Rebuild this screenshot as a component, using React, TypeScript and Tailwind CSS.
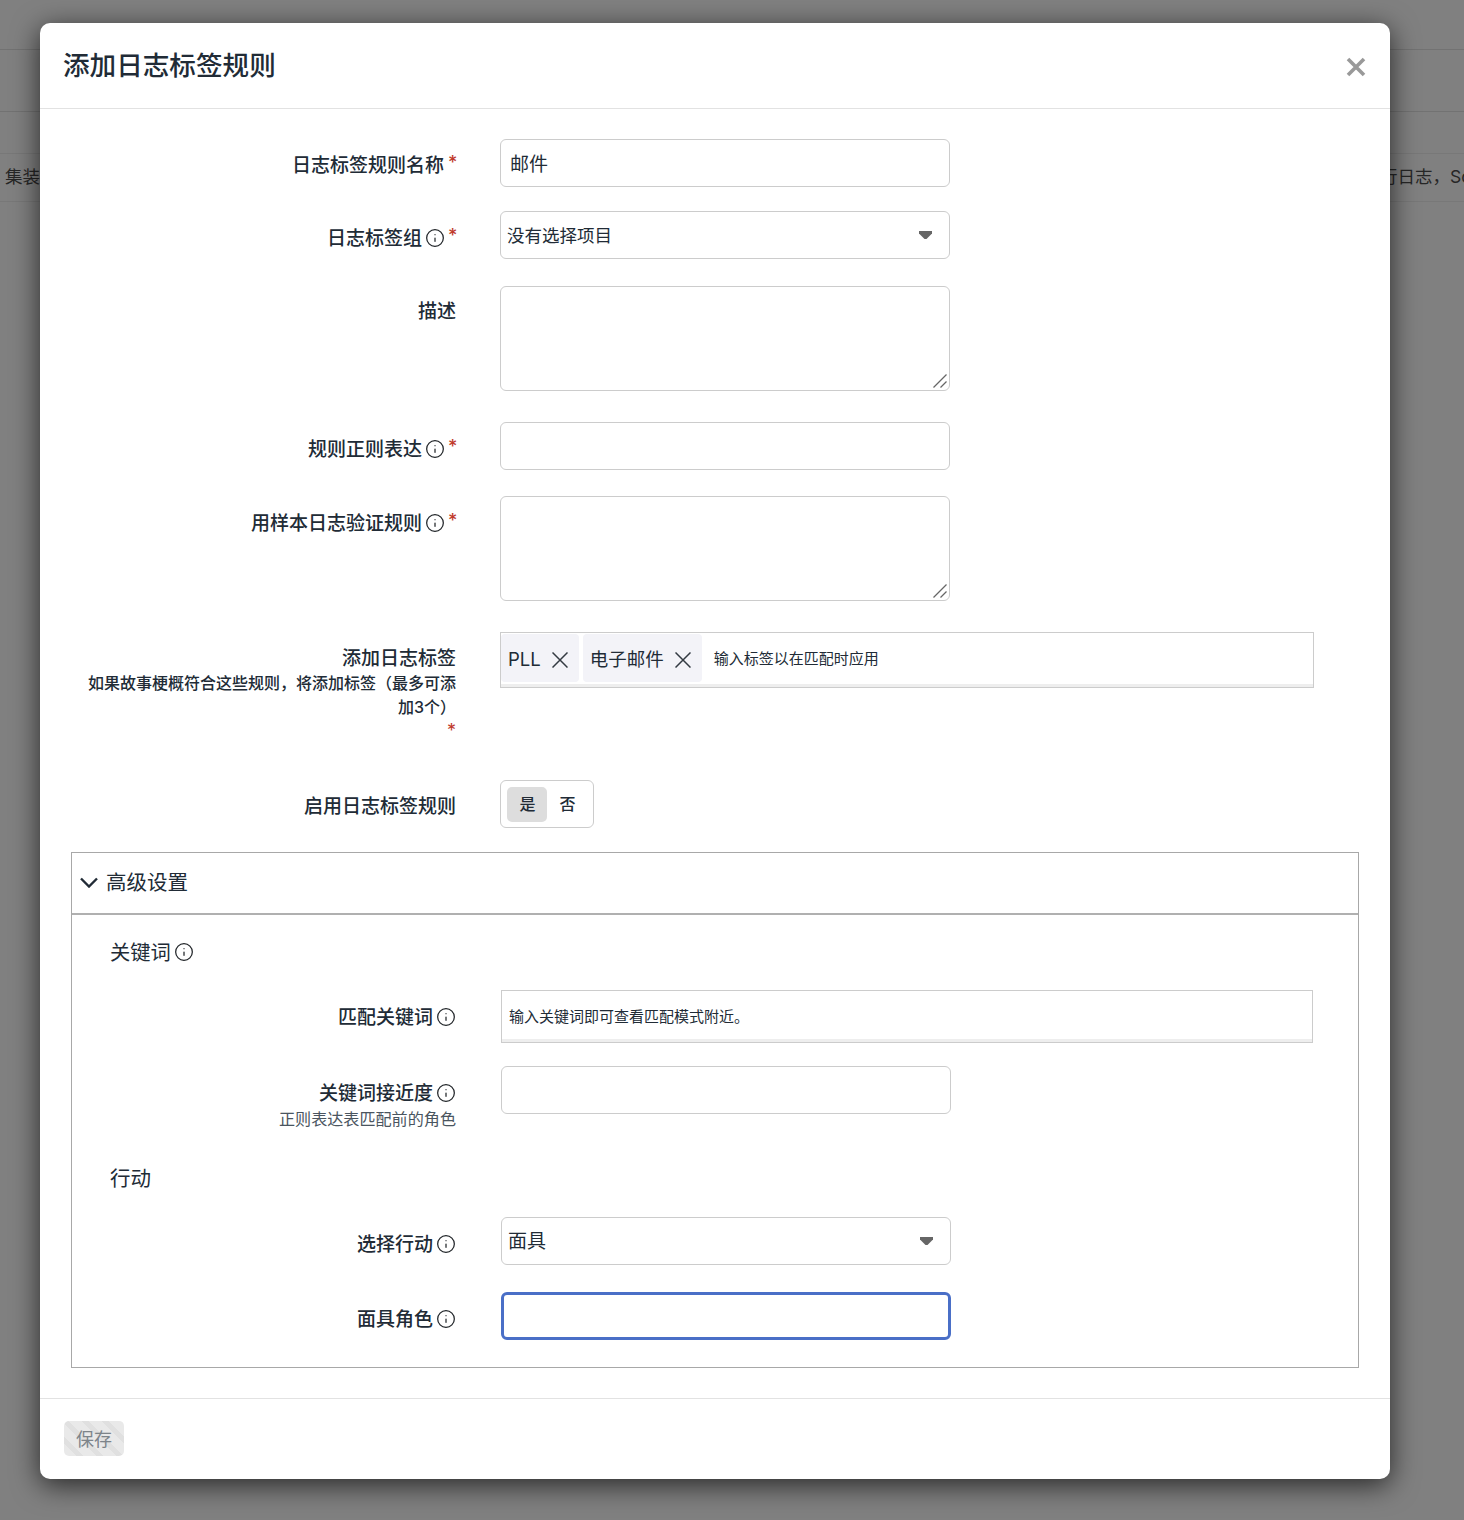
import { Info } from "lucide-react";
import type { ReactNode } from "react";

const inputBox = "h-12 w-[450px] rounded-[6px] border border-[#cccccc] bg-white px-[9px] pb-[2px] text-[19px] text-[#212b36] outline-none";

function Tip() {
  return <Info size={20} strokeWidth={1.5} className="relative -top-[1px] ml-[3px] inline-block shrink-0 text-[#212529]" />;
}

function Star({ after = "ml-[4px]" }: { after?: string }) {
  return <span className={`relative -top-[3px] inline-block w-[8px] text-center text-[18px] leading-none text-[#c0392b] ${after}`}>*</span>;
}

function Label({ children, top = "pt-[15px]", width = "w-[385px]" }: { children: ReactNode; top?: string; width?: string }) {
  return (
    <div className={`shrink-0 pl-[15px] text-right ${width} ${top}`}>
      <div className="flex items-center justify-end text-[19px] leading-6 font-medium text-[#212b36]">{children}</div>
    </div>
  );
}

function Caret() {
  return (
    <svg width="13" height="8" viewBox="0 0 13 8" className="shrink-0">
      <path d="M0 0H13V2.5L7.5 8H5.5L0 2.5Z" fill="#666666" />
    </svg>
  );
}

function Select({ value, size = "text-[17.5px]" }: { value: string; size?: string }) {
  return (
    <div className={`flex h-12 w-[450px] items-center justify-between rounded-[6px] border border-[#cccccc] pr-[17px] pl-[6px] text-[#212b36] ${size}`}>
      <span className="pt-[2px]">{value}</span>
      <Caret />
    </div>
  );
}

function Area() {
  return (
    <div className="relative h-[105px] w-[450px]">
      <textarea className="block h-full w-full resize-none rounded-[6px] border border-[#cccccc] bg-white outline-none" />
      <svg width="16" height="16" viewBox="0 0 16 16" className="pointer-events-none absolute right-[2px] bottom-[2px]">
        <path d="M1.5 14.5L14.5 1.5M8.5 14.5L14.5 8.5" stroke="#666666" strokeWidth="1.3" fill="none" />
      </svg>
    </div>
  );
}

function Tag({ text }: { text: string }) {
  return (
    <div className="mt-[1px] mr-[4px] flex h-[48px] items-center rounded-[4px] bg-[#f3f3f8] pr-[11px] pl-[7px] text-[18.5px] text-[#212b36]">
      <span className="pt-[4px]">{text}</span>
      <svg width="16" height="16" viewBox="0 0 16 16" className="mt-[3px] ml-[11px]">
        <path d="M0.5 0.5L15.5 15.5M15.5 0.5L0.5 15.5" stroke="#333a42" strokeWidth="1.5" fill="none" />
      </svg>
    </div>
  );
}

export default function App() {
  return (
    <div
      className="relative h-[1520px] w-full overflow-hidden bg-[#808080]"
      style={{ fontFamily: 'Inter, "Noto Sans CJK SC", sans-serif' }}
    >
      {/* page behind the dialog */}
      <div className="text-[17.5px] text-[#262626]">
        <div className="h-[50px] border-b border-[#727272]" />
        <div className="h-[62px] border-b border-[#727272]" />
        <div className="h-[42px] border-b border-[#787878]" />
        <div className="flex h-[48px] items-center justify-between border-b border-[#787878] pl-[5px]">
          <span>集装箱</span>
          <span className="w-[84px] overflow-hidden whitespace-nowrap">行日志，Sc</span>
        </div>
      </div>

      {/* dialog */}
      <div className="absolute top-[23px] left-[40px] flex h-[1456px] w-[1350px] flex-col rounded-[10px] bg-white shadow-[0_6px_28px_rgba(0,0,0,0.7)]">
        <div className="flex h-[86px] shrink-0 items-center justify-between border-b border-[#e2e2e2] pr-[24px] pl-[23px]">
          <h1 className="text-[26.6px] font-medium text-[#212b36]">添加日志标签规则</h1>
          <svg width="20" height="20" viewBox="0 0 20 20" className="mt-[3px]">
            <path d="M2 2L18 18M18 2L2 18" stroke="#999999" strokeWidth="3.6" />
          </svg>
        </div>

        <div className="flex-1 px-[31px] pt-[30px]">
          <div className="flex gap-[44px]">
            <Label>
              日志标签规则名称
              <Star />
            </Label>
            <input className={inputBox} defaultValue="邮件" />
          </div>

          <div className="mt-[24px] flex gap-[44px]">
            <Label top="pt-[16px]">
              日志标签组
              <Tip />
              <Star after="ml-[3px]" />
            </Label>
            <Select value="没有选择项目" />
          </div>

          <div className="mt-[27px] flex gap-[44px]">
            <Label top="pt-[14px]">描述</Label>
            <Area />
          </div>

          <div className="mt-[31px] flex gap-[44px]">
            <Label top="pt-[16px]">
              规则正则表达
              <Tip />
              <Star after="ml-[3px]" />
            </Label>
            <input className={inputBox} />
          </div>

          <div className="mt-[26px] flex gap-[44px]">
            <Label top="pt-[16px]">
              用样本日志验证规则
              <Tip />
              <Star after="ml-[3px]" />
            </Label>
            <Area />
          </div>

          <div className="mt-[31px] flex gap-[44px]">
            <div className="w-[385px] shrink-0 pt-[15px] pl-[15px] text-right text-[#212b36]">
              <div className="text-[19px] leading-6 font-medium">添加日志标签</div>
              <div className="text-[16px] leading-[24px] font-medium">如果故事梗概符合这些规则，将添加标签（最多可添加3个）</div>
              <div className="h-[16px]">
                <span className="text-[18px] leading-none text-[#c0392b]">*</span>
              </div>
            </div>
            <div className="flex h-[56px] w-[814px] items-start border border-[#cccccc] shadow-[inset_0_-3px_0_#eeeeee]">
              <Tag text="PLL" />
              <Tag text="电子邮件" />
              <span className="ml-[8px] self-start pt-[16px] text-[15px] leading-5 text-[#212b36]">输入标签以在匹配时应用</span>
            </div>
          </div>

          <div className="mt-[45px] flex gap-[44px]">
            <Label>启用日志标签规则</Label>
            <div className="flex h-12 w-[94px] items-center rounded-[6px] border border-[#cccccc] px-[6px] text-[16px] font-medium text-[#212b36]">
              <span className="flex h-[35px] w-[40px] items-center justify-center rounded-[5px] bg-[#dddddd] pl-[1px]">是</span>
              <span className="flex h-[35px] w-[40px] items-center justify-center pl-[1px]">否</span>
            </div>
          </div>

          {/* advanced settings */}
          <div className="mt-[24px] h-[516px] w-[1288px] border border-[#a8a8a8]">
            <div className="flex h-[62px] items-center border-b-2 border-[#b0b0b0] pl-[8px] text-[20.5px] text-[#212b36]">
              <svg width="18" height="11" viewBox="0 0 18 11" className="mr-[8px] -mt-[2px]">
                <path d="M1 1.5L9 9.5L17 1.5" stroke="#212b36" strokeWidth="2.4" fill="none" />
              </svg>
              <span className="pt-[1px]">高级设置</span>
            </div>

            <div className="pt-[26px]">
              <div className="flex items-center pl-[38px] text-[20.3px] leading-6 text-[#212b36]">
                关键词
                <Tip />
              </div>

              <div className="mt-[25px] flex gap-[45px]">
                <Label top="pt-[16px]" width="w-[384px]">
                  匹配关键词
                  <Tip />
                </Label>
                <div className="flex h-[53px] w-[812px] items-center border border-[#cccccc] pt-[2px] pl-[7px] text-[15px] text-[#212b36] shadow-[inset_0_-3px_0_#eeeeee]">
                  输入关键词即可查看匹配模式附近。
                </div>
              </div>

              <div className="mt-[23px] flex gap-[45px]">
                <div className="w-[384px] shrink-0 pt-[16px] text-right">
                  <div className="flex items-center justify-end text-[19px] leading-6 font-medium text-[#212b36]">
                    关键词接近度
                    <Tip />
                  </div>
                  <div className="mt-[3px] text-[16.1px] leading-5 text-[#4a5560]">正则表达表匹配前的角色</div>
                </div>
                <input className={inputBox} />
              </div>

              <div className="mt-[38px] pl-[38px] text-[20.5px] leading-6 text-[#212b36]">行动</div>

              <div className="mt-[26px] flex gap-[45px]">
                <Label top="pt-[16px]" width="w-[384px]">
                  选择行动
                  <Tip />
                </Label>
                <Select value="面具" size="text-[19px]" />
              </div>

              <div className="mt-[27px] flex gap-[45px]">
                <Label top="pt-[16px]" width="w-[384px]">
                  面具角色
                  <Tip />
                </Label>
                <div className="h-12 w-[450px] rounded-[6px] border-[3px] border-[#4a6fc7] bg-white" />
              </div>
            </div>
          </div>
        </div>

        <div className="flex h-[81px] shrink-0 items-start border-t border-[#e2e2e2] pt-[22px] pl-[24px]">
          <button className="h-[35px] w-[60px] rounded-[5px] bg-[repeating-linear-gradient(45deg,#e9e9e9_0,#e9e9e9_9px,#e0e0e0_9px,#e0e0e0_14px)] pt-[1px] text-[18px] text-[#7d848a]">
            保存
          </button>
        </div>
      </div>
    </div>
  );
}
